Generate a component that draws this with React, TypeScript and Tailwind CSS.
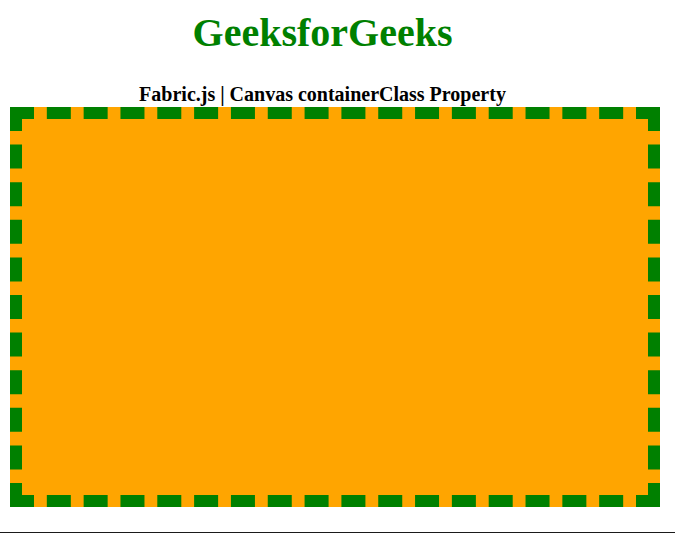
export default function App() {
  return (
    <div className="w-[675px] h-[533px] bg-white flex flex-col" style={{ fontFamily: '"Liberation Serif", "Times New Roman", serif' }}>
      <div className="w-[645px] pt-[11px] text-center">
        <h1 className="text-[40px] leading-[44px] font-bold text-[#008000]">GeeksforGeeks</h1>
        <h2 className="mt-[29px] text-[20px] leading-[20px] font-bold text-black">Fabric.js | Canvas containerClass Property</h2>
      </div>
      <div className="ml-[10px] mt-[3px] w-[650px] h-[400px] box-border border-[12px] border-dashed border-[#008000] bg-[#ffa500]" />
      <div className="mt-auto h-px w-full bg-[#1a1a1a]" />
    </div>
  );
}
